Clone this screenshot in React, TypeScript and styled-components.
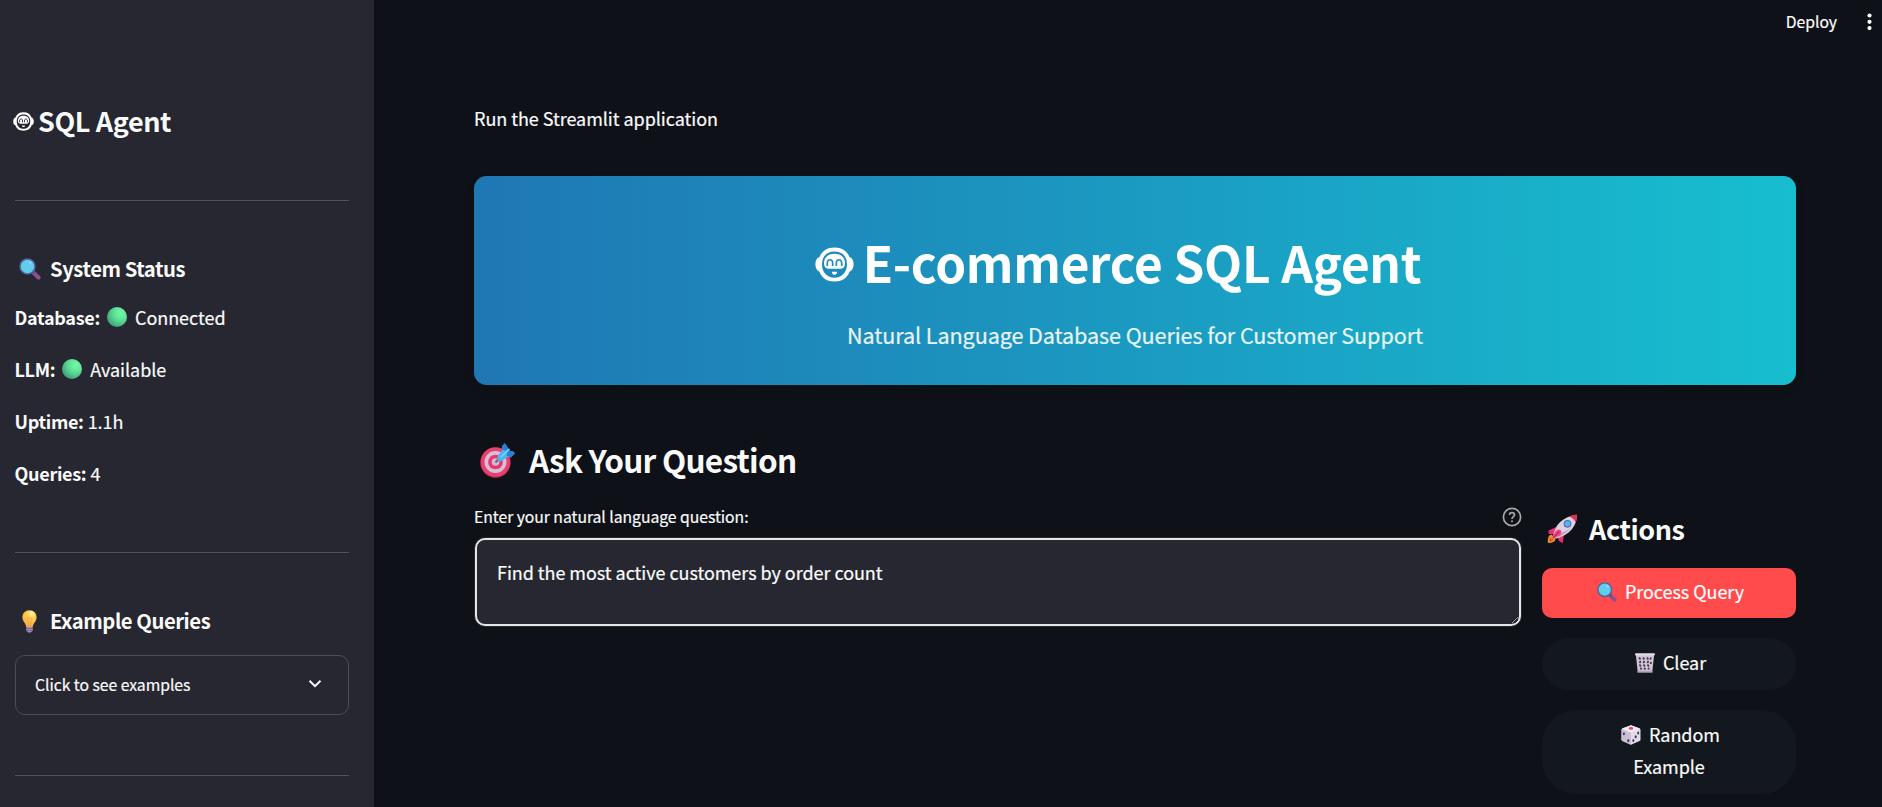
import React, { useId } from 'react';
import styled, { createGlobalStyle } from 'styled-components';

const GlobalStyle = createGlobalStyle`
  *, *::before, *::after { box-sizing: border-box; }
  body {
    margin: 0;
    background: #0e1117;
    color: #fafafa;
    font-family: "Noto Sans CJK SC", "Noto Sans", sans-serif;
    font-size: 18px;
    letter-spacing: -0.045px;
    -webkit-text-stroke: 0.2px;
    overflow: hidden;
  }
  h1, h2, h3, strong { -webkit-text-stroke: 0; }
  svg { display: block; flex: none; }
`;

const Page = styled.div`
  display: flex;
  height: 807px;
  overflow: hidden;
`;

/* ---------- Sidebar ---------- */

const Sidebar = styled.aside`
  width: 374px;
  flex: none;
  padding: 101px 25px 0 15px;
  background: #262730;
`;

const SidebarTitle = styled.h2`
  display: flex;
  align-items: center;
  gap: 4px;
  height: 40px;
  margin: 0 0 59px -2px;
  font-size: 27px;
  font-weight: 700;
  line-height: 40px;
  letter-spacing: -0.4px;
`;

const Divider = styled.hr`
  height: 1px;
  margin: 0;
  border: 0;
  background: #52535b;
`;

const SidebarHeading = styled.h3<{ $iconGap: number; $indent: number }>`
  display: flex;
  align-items: center;
  gap: ${(p) => p.$iconGap}px;
  height: 30px;
  margin: 53px 0 0;
  padding-left: ${(p) => p.$indent}px;
  font-size: 20.25px;
  font-weight: 700;
  line-height: 30px;
  letter-spacing: -0.45px;
`;

const StatusList = styled.div`
  margin-left: -0.5px;
  padding: 7px 0 53px;
`;

const StatusRow = styled.p`
  display: flex;
  align-items: center;
  height: 52px;
  margin: 0;
  line-height: 32px;

  strong {
    margin-right: 4px;
    font-weight: 700;
    letter-spacing: -0.3px;
  }
  svg { margin: 0 8px 0 3px; }
`;

const Expander = styled.button`
  display: flex;
  align-items: center;
  justify-content: space-between;
  width: 100%;
  height: 60px;
  margin: 19px 0 60px;
  padding: 0 26px 2px 19px;
  border: 1px solid #4b4c55;
  border-radius: 10px;
  background: transparent;
  color: inherit;
  font: inherit;
  font-size: 15.75px;
  letter-spacing: inherit;
`;

/* ---------- Main ---------- */

const Main = styled.main`
  display: flex;
  flex: 1;
  flex-direction: column;
`;

const Toolbar = styled.header`
  display: flex;
  align-items: center;
  justify-content: flex-end;
  gap: 30px;
  height: 43px;
  padding-right: 10px;
  font-size: 15.75px;
`;

const Content = styled.div`
  width: 1322px;
  margin: 59px 0 0 100px;
`;

const Note = styled.p`
  height: 32px;
  margin: 0 0 42px;
  line-height: 32px;
`;

const Banner = styled.section`
  display: flex;
  flex-direction: column;
  align-items: center;
  height: 209px;
  padding-top: 51px;
  border-radius: 12.5px;
  background: linear-gradient(90deg, #1f77b4, #17becf);
  box-shadow: 0 5px 8px rgba(15, 18, 10, 0.15);
  color: #fff;
`;

const BannerTitle = styled.h1`
  display: flex;
  align-items: center;
  gap: 9px;
  height: 70px;
  margin: 0 0 21px;
  padding-right: 34px;
  font-size: 49.5px;
  font-weight: 700;
  line-height: 70px;
  letter-spacing: -0.3px;

  svg { position: relative; top: 2px; }
`;

const BannerSubtitle = styled.p`
  margin: 0;
  font-size: 21.6px;
  line-height: 34px;
  letter-spacing: -0.1px;
  opacity: 0.9;
`;

const SectionHeading = styled.h2`
  display: flex;
  align-items: center;
  gap: 14px;
  height: 44px;
  margin: 52px 0 24px;
  padding-left: 6px;
  font-size: 31.5px;
  font-weight: 700;
  line-height: 44px;
  letter-spacing: -0.74px;

  svg { position: relative; top: 1px; }
`;

const Columns = styled.div`
  display: flex;
  align-items: flex-start;
  gap: 20px;
`;

const QuestionColumn = styled.div`
  width: 1048px;
`;

const FieldLabel = styled.label`
  display: flex;
  align-items: center;
  justify-content: space-between;
  height: 24px;
  margin-bottom: 8px;
  font-size: 15.75px;
  line-height: 24px;
`;

const FieldFrame = styled.div`
  display: flex;
  height: 90px;
  border: 1px solid #262730;
  border-radius: 11px;
  background: #262730;
`;

const Field = styled.textarea`
  flex: 1;
  padding: 16px 20px;
  border: 2px solid #e6e6e7;
  border-radius: 10px;
  outline: 0;
  background: #262730;
  color: #fafafa;
  font: inherit;
  letter-spacing: inherit;
  line-height: 32px;
  resize: vertical;
`;

const ActionsColumn = styled.div`
  display: flex;
  flex: 1;
  flex-direction: column;
  gap: 20px;
  padding-top: 5px;
`;

const ActionsHeading = styled.h3`
  display: flex;
  align-items: center;
  gap: 11px;
  height: 38px;
  margin: 0;
  padding-left: 5px;
  font-size: 27px;
  font-weight: 700;
  line-height: 38px;
  letter-spacing: -0.4px;
`;

const ActionButton = styled.button<{ $primary?: boolean; $tall?: boolean }>`
  display: flex;
  flex-direction: column;
  align-items: center;
  justify-content: center;
  width: 254px;
  height: ${(p) => (p.$primary ? 50 : p.$tall ? 84 : 52)}px;
  padding: 0 0 4px;
  border: 0;
  border-radius: ${(p) => (p.$primary ? 10 : p.$tall ? 34 : 26)}px;
  background: ${(p) => (p.$primary ? '#ff4b4b' : '#13171e')};
  color: ${(p) => (p.$primary ? '#fff' : '#fafafa')};
  font: inherit;
  letter-spacing: inherit;
  line-height: 32px;
`;

const ButtonLine = styled.span<{ $withIcon?: boolean }>`
  display: flex;
  align-items: center;
  gap: 8px;
  height: 32px;
  padding-left: ${(p) => (p.$withIcon ? 3 : 0)}px;

  svg { position: relative; top: 1px; }
`;

/* ---------- Icons ---------- */

const RobotIcon = ({ width, height }: { width: number; height: number }) => (
  <svg width={width} height={height} viewBox="0 0 39 35" preserveAspectRatio="none">
    <path
      fill="#fff"
      fillRule="evenodd"
      d="M19.5 0.5C12 .5 7 4 4.5 10C1.500 11 .4 14 .4 17.300C.4 21 1.700 23.500 4.300 24.500C7 31.500 12.500 34.500 19.500 34.500S32 31.500 34.700 24.500C37.300 23.500 38.600 21 38.600 17.300C38.600 14 37.500 11 34.500 10C32 4 27 .5 19.500 .5ZM19.500 4.500C27.500 4.500 32 9.500 32 17.300C32 25.500 27 30.700 19.500 30.700S7 25.500 7 17.300C7 9.500 11.500 4.500 19.500 4.500Z"
    />
    <path
      fill="#fff"
      d="M19.500 6.800C13.500 6.800 9 10 9 16.300C9 20 11 21.800 14 21.800H25C28 21.800 30 20 30 16.300C30 10 25.500 6.800 19.500 6.800Z"
    />
    <path
      d="M12.300 19V16.500C12.300 11.500 17.700 11.500 17.700 16.500V19M21.300 19V16.500C21.300 11.500 26.700 11.500 26.700 16.500V19"
      fill="none"
      stroke="var(--robot-ink)"
      strokeWidth="1.700"
    />
    <path fill="#fff" d="M17 24.800H22C22.300 26.500 21.200 27.700 19.500 27.700S16.700 26.500 17 24.800Z" />
  </svg>
);

const RobotTint = styled.span<{ $ink: string }>`
  display: flex;
  --robot-ink: ${(p) => p.$ink};
`;

const MagnifierIcon = ({ size }: { size: number }) => (
  <svg width={size} height={size} viewBox="0 0 22 22">
    <path d="M13.800 14L19.500 19.600" stroke="#8b4f92" strokeWidth="4.200" strokeLinecap="round" />
    <path d="M13 13L15.300 15.300" stroke="#5d4a7d" strokeWidth="2.500" />
    <circle cx="8.500" cy="8.400" r="7.500" fill="#62cdea" stroke="#4c659c" strokeWidth="1.500" />
    <circle cx="11.300" cy="4.600" r="1.400" fill="#a9c9f5" />
  </svg>
);

const GreenBall = () => {
  const id = useId();
  return (
    <svg width="20" height="20" viewBox="0 0 20 20">
      <defs>
        <radialGradient id={id} cx="0.7" cy="0.3" r="0.85">
          <stop offset="0" stopColor="#71fba3" />
          <stop offset="0.4" stopColor="#5fe397" />
          <stop offset="0.8" stopColor="#46ad80" />
          <stop offset="1" stopColor="#568b91" />
        </radialGradient>
      </defs>
      <circle cx="10" cy="10" r="10" fill={`url(#${id})`} />
    </svg>
  );
};

const BulbIcon = () => {
  const id = useId();
  return (
    <svg width="15" height="23" viewBox="0 0 15 23">
      <defs>
        <radialGradient id={id} cx="0.65" cy="0.2" r="0.8">
          <stop offset="0" stopColor="#fff0b5" />
          <stop offset="0.35" stopColor="#ffd052" />
          <stop offset="1" stopColor="#f9aa42" />
        </radialGradient>
      </defs>
      <path d="M7.500 .3C3.200 .3 .4 3.200 .4 7.200C.4 11.500 3.800 13 4.300 17H10.700C11.200 13 14.600 11.500 14.600 7.200C14.600 3.200 11.800 .3 7.500 .3Z" fill={`url(#${id})`} />
      <path d="M6.200 16.500V11C4 8.500 6 6.800 7.500 8.500C9 6.800 11 8.500 8.800 11V16.500" fill="none" stroke="#ef9c36" strokeWidth="0.8" />
      <path d="M4.300 16.800H10.700V20.400L8.800 22.500H6.200L4.300 20.400Z" fill="#aa91b6" />
      <path d="M4 18.800L11 18.200M4.500 20.800L10.500 20.200" stroke="#6e5784" strokeWidth="0.800" />
    </svg>
  );
};

const ChevronIcon = () => (
  <svg width="14" height="10" viewBox="0 0 14 10">
    <path d="M1.500 1.700L7 7.200L12.500 1.700" fill="none" stroke="#fafafa" strokeWidth="2" />
  </svg>
);

const TargetIcon = () => (
  <svg width="35" height="35" viewBox="0 0 35 35">
    <circle cx="15.500" cy="19.500" r="15.200" fill="#c52e5c" />
    <circle cx="15.500" cy="19" r="14.600" fill="#e8416d" />
    <circle cx="15.500" cy="19" r="11" fill="#d4bed9" />
    <circle cx="15.500" cy="19" r="7.300" fill="#e9376a" />
    <circle cx="15.500" cy="19" r="3.800" fill="#d0bdd5" />
    <path d="M15.500 19.500L20 14.500" stroke="#77618c" strokeWidth="2" />
    <path d="M17.500 13.500L22.500 6.500L21.800 3.500L24.800 .3L27.600 4.500L28 7.500L33.800 8.800L34.700 10.500L30.800 14.500L28 13.800L20.500 18.500Q16.500 18 17.500 13.500Z" fill="#48b4f3" />
    <path d="M28 7.300L33.800 8.800L34.700 10.500L30.800 14.500L26.500 12.500ZM24.800 .3L27.600 4.500L26.500 8L22.500 6.500L21.800 3.500Z" fill="#297fdc" />
    <path d="M20.500 14.500L29.500 5.800" stroke="#7ad0ff" strokeWidth="1.700" />
  </svg>
);

const RocketIcon = () => (
  <svg width="31" height="30" viewBox="0 0 31 30">
    <path d="M4.500 20.500Q.5 21 .7 28.800Q8 29.600 8.700 24.800Z" fill="#f38a2d" />
    <path d="M3 24Q2 26 2.500 27.500Q5.500 27.500 6.500 25.500Z" fill="#c75c25" />
    <path d="M9 13L1.300 16.800L2 20L8 20ZM17 20L15.700 29.200L12 27L10.500 22Z" fill="#e92f71" />
    <path d="M6.200 21.800C7.500 12 15 2.500 29.500 .7C30.800 11 22 21.500 9 24.500Z" fill="#ddd1e1" />
    <path d="M7 24.500C11 23.800 19 20 23.800 13.800C20 17 15 19 9 20Z" fill="#b9a6c5" />
    <path d="M22 2.600Q26 .8 29.800 .5Q30.600 4.500 28.700 8.500Q26.800 4.200 22 2.600Z" fill="#e72954" />
    <path d="M5 24.500L8.200 17.500Q11 14.500 13.500 16Q15.500 18 13 21.500L5 24.500Z" fill="#f6457f" />
    <path d="M6 24L12.500 17.500" stroke="#ce1e5b" strokeWidth="1.200" />
    <circle cx="20.500" cy="9.800" r="3.300" fill="#55b4f8" stroke="#4d6caf" strokeWidth="1.100" />
  </svg>
);

const BasketIcon = () => (
  <svg width="20" height="20" viewBox="0 0 20 20">
    <path d="M.8 1.500H19.200L17.300 18.500H2.700Z" fill="#cfc4d5" />
    <path
      d="M4 4.500L5.500 6.500M8 4.500L9.300 6.500M12 4.500L13.300 6.500M16 4.500L15.200 6.500M5.700 8L4.500 10M9.500 8L8.300 10M13.500 8L12.300 10M4.500 11.500L5.800 13.500M8.500 11.500L9.800 13.500M12.500 11.500L13.800 13.500M6.500 14.800L5.500 16.500M10.300 14.800L9.300 16.500M14 14.800L13.300 16.500M15.800 9V11"
      stroke="#43384f"
      strokeWidth="1.700"
    />
    <path d="M0 1.200Q0 .3 1 .3H19Q20 .3 20 1.200T19 2.500H1Q0 2.500 0 1.200Z" fill="#e3dce6" />
    <path d="M2.500 17.600H17.500V19.700H2.500Z" fill="#b7a4c5" />
  </svg>
);

const DieIcon = () => (
  <svg width="20" height="20" viewBox="0 0 20 20">
    <path d="M10 .3L18.500 3.300Q19.500 3.700 19.500 5V14.500Q19.500 15.500 18.500 16L10 19.800L1.500 16Q.5 15.500 .5 14.500V5Q.5 3.700 1.500 3.300Z" fill="#e3dce5" />
    <path d="M.6 4L10 7.800V19.800L1.500 16Q.5 15.500 .5 14.500Z" fill="#cdbfd2" />
    <path d="M10 .3L19 3.700L10 7.500L1 3.700Z" fill="#f1edf2" />
    <ellipse cx="10" cy="3.400" rx="2.300" ry="1.300" fill="#ef4661" />
    <g fill="#453070">
      <ellipse cx="2.900" cy="8.700" rx="1" ry="1.500" />
      <ellipse cx="7.300" cy="15.700" rx="1.100" ry="1.600" />
      <ellipse cx="17.200" cy="8" rx="1" ry="1.500" />
      <ellipse cx="14.700" cy="11.700" rx="1.100" ry="1.500" />
      <ellipse cx="12.300" cy="15.600" rx="1" ry="1.500" />
    </g>
  </svg>
);

const HelpIcon = () => (
  <svg width="20" height="20" viewBox="0 0 20 20" fill="none" stroke="#a6a7aa" strokeWidth="1.700">
    <circle cx="10" cy="10" r="8.600" />
    <path d="M7.500 7.900Q7.600 5.600 10 5.600T12.500 7.900C12.500 9.600 10 9.700 10 11.900" />
    <circle cx="10" cy="14.200" r="1" fill="#a6a7aa" stroke="none" />
  </svg>
);

const MenuDots = () => (
  <svg width="5" height="18" viewBox="0 0 5 18" fill="#fafafa">
    <circle cx="2.500" cy="2.500" r="2.100" />
    <circle cx="2.500" cy="8.800" r="2.100" />
    <circle cx="2.500" cy="15.100" r="2.100" />
  </svg>
);

export default function App() {
  return (
    <>
      <GlobalStyle />
      <Page>
        <Sidebar>
          <SidebarTitle>
            <RobotTint $ink="#262730"><RobotIcon width={21} height={19} /></RobotTint>
            SQL Agent
          </SidebarTitle>
          <Divider />
          <SidebarHeading $iconGap={9} $indent={4}>
            <MagnifierIcon size={22} />
            System Status
          </SidebarHeading>
          <StatusList>
            <StatusRow><strong>Database:</strong><GreenBall />Connected</StatusRow>
            <StatusRow><strong>LLM:</strong><GreenBall />Available</StatusRow>
            <StatusRow><strong>Uptime:</strong>1.1h</StatusRow>
            <StatusRow><strong>Queries:</strong>4</StatusRow>
          </StatusList>
          <Divider />
          <SidebarHeading $iconGap={13} $indent={7}>
            <BulbIcon />
            Example Queries
          </SidebarHeading>
          <Expander>
            Click to see examples
            <ChevronIcon />
          </Expander>
          <Divider />
        </Sidebar>
        <Main>
          <Toolbar>
            <span>Deploy</span>
            <MenuDots />
          </Toolbar>
          <Content>
            <Note>Run the Streamlit application</Note>
            <Banner>
              <BannerTitle>
                <RobotTint $ink="#1f8dbd"><RobotIcon width={39} height={35} /></RobotTint>
                E-commerce SQL Agent
              </BannerTitle>
              <BannerSubtitle>Natural Language Database Queries for Customer Support</BannerSubtitle>
            </Banner>
            <SectionHeading>
              <TargetIcon />
              Ask Your Question
            </SectionHeading>
            <Columns>
              <QuestionColumn>
                <FieldLabel htmlFor="question">
                  Enter your natural language question:
                  <HelpIcon />
                </FieldLabel>
                <FieldFrame>
                  <Field id="question" defaultValue="Find the most active customers by order count" />
                </FieldFrame>
              </QuestionColumn>
              <ActionsColumn>
                <ActionsHeading>
                  <RocketIcon />
                  Actions
                </ActionsHeading>
                <ActionButton $primary>
                  <ButtonLine $withIcon><MagnifierIcon size={20} />Process Query</ButtonLine>
                </ActionButton>
                <ActionButton>
                  <ButtonLine $withIcon><BasketIcon />Clear</ButtonLine>
                </ActionButton>
                <ActionButton $tall>
                  <ButtonLine $withIcon><DieIcon />Random</ButtonLine>
                  <ButtonLine>Example</ButtonLine>
                </ActionButton>
              </ActionsColumn>
            </Columns>
          </Content>
        </Main>
      </Page>
    </>
  );
}
